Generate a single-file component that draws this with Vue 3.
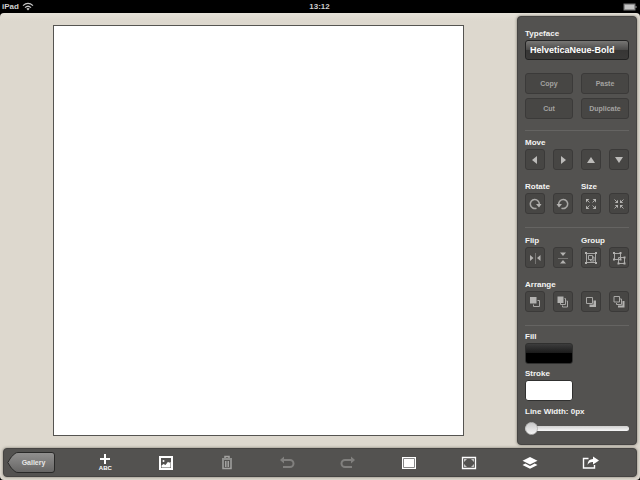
<script setup>
import { ref } from 'vue'

const typeface = ref('HelveticaNeue-Bold')
const lineWidth = ref(0)
const edits = ['Copy', 'Paste', 'Cut', 'Duplicate']
const moves = [
  { name: 'Move left', points: '7,10 12,6 12,14' },
  { name: 'Move right', points: '13,10 8,6 8,14' },
  { name: 'Move up', points: '10,7 14,13 6,13' },
  { name: 'Move down', points: '10,13 6,7 14,7' },
]
</script>

<template>
  <div class="screen">
    <header class="status">
      <span class="device">iPad
        <svg width="12" height="9" viewBox="0 0 12 9" aria-hidden="true">
          <path d="M1 3.6Q6-1 11 3.6M3 5.6Q6 2.9 9 5.6" fill="none" stroke="#c8c8c8" stroke-width="1.2" />
          <path d="M4.4 6.7Q6 5.2 7.6 6.7L6 8.4Z" fill="#c8c8c8" />
        </svg>
      </span>
      <time>13:12</time>
      <svg class="battery" width="14" height="8" viewBox="0 0 14 8" aria-hidden="true">
        <rect x="1" y="1" width="11" height="6" fill="#aaa" stroke="#777" />
        <rect x="2" y="2" width="9" height="4" fill="#c4c4c4" />
        <rect x="12.5" y="3" width="1" height="2" fill="#999" />
      </svg>
    </header>

    <div class="desk">
      <main class="work">
        <section class="stage"><div class="canvas"></div></section>

        <aside class="panel">
          <section class="group">
            <label for="face">Typeface</label>
            <select id="face" v-model="typeface" class="face">
              <option>HelveticaNeue-Bold</option>
            </select>
            <div class="edits">
              <button v-for="e in edits" :key="e" class="key">{{ e }}</button>
            </div>
          </section>

          <section class="group place">
            <h2>Move</h2>
            <div class="keys">
              <button v-for="m in moves" :key="m.name" class="key" :aria-label="m.name">
                <svg viewBox="0 0 20 20"><polygon :points="m.points" fill="#bcbbb9" /></svg>
              </button>
            </div>
            <div class="heads"><h2>Rotate</h2><h2>Size</h2></div>
            <div class="keys">
              <button class="key" aria-label="Rotate clockwise">
                <svg viewBox="0 0 20 20">
                  <path d="M11.500 14.200A4.500 4.500 0 1 1 14.300 10.500" class="arc" />
                  <path d="M11 10H16.500L14 13.500Z" class="solid" />
                </svg>
              </button>
              <button class="key" aria-label="Rotate anticlockwise">
                <svg viewBox="0 0 20 20">
                  <path d="M8.500 14.200A4.500 4.500 0 1 0 5.700 10.500" class="arc" />
                  <path d="M9 10H3.500L6 13.500Z" class="solid" />
                </svg>
              </button>
              <button class="key" aria-label="Enlarge">
                <svg viewBox="0 0 20 20">
                  <path d="M5 5h3.400L5 8.400ZM15 5v3.400L11.600 5ZM5 15v-3.400L8.400 15ZM15 15h-3.400L15 11.600Z" class="solid" />
                  <path d="M6 6l2.500 2.500M14 6l-2.500 2.500M6 14l2.500-2.500M14 14l-2.500-2.500" class="line" />
                </svg>
              </button>
              <button class="key" aria-label="Shrink">
                <svg viewBox="0 0 20 20">
                  <path d="M9 9V5.800L5.800 9ZM11 9V5.800L14.200 9ZM9 11v3.200L5.800 11ZM11 11v3.200L14.200 11Z" class="solid" />
                  <path d="M5.500 5.500l2.500 2.500M14.500 5.500L12 8M5.500 14.500L8 12M14.500 14.500L12 12" class="line" />
                </svg>
              </button>
            </div>
          </section>

          <section class="group flip">
            <div class="heads"><h2>Flip</h2><h2>Group</h2></div>
            <div class="keys">
              <button class="key" aria-label="Flip horizontally">
                <svg viewBox="0 0 20 20">
                  <path d="M5 7L8.500 10L5 13ZM15.500 7L12 10L15.500 13Z" class="solid" />
                  <path d="M10.500 5v11" class="line dim" />
                </svg>
              </button>
              <button class="key" aria-label="Flip vertically">
                <svg viewBox="0 0 20 20">
                  <path d="M7 4.500h6L10 8ZM7 15.500h6L10 12Z" class="solid" />
                  <path d="M5 10.500h10" class="line dim" />
                </svg>
              </button>
              <button class="key" aria-label="Group">
                <svg viewBox="0 0 20 20">
                  <path d="M5.500 5.500h9v9h-9ZM7.500 7.500h4v4h-4ZM9.500 12v1h3.500v-4h-1" class="line" />
                  <path d="M4 4h2v2H4ZM14 4H16v2h-2ZM4 14h2V16H4ZM14 14H16V16h-2Z" class="solid" />
                </svg>
              </button>
              <button class="key" aria-label="Ungroup">
                <svg viewBox="0 0 20 20">
                  <path d="M5.500 5.500h6v6h-6ZM9.500 9.500h6v6h-6Z" class="line" />
                  <path d="M4 4h2v2h-2ZM10.500 4h2v2h-2ZM4 10.500h2v2h-2ZM10.500 10.500h2v2h-2ZM14.500 8.500h2v2h-2ZM8.500 14.500h2v2h-2ZM14.500 14.500h2v2h-2Z" class="solid" />
                </svg>
              </button>
            </div>
            <h2 class="spaced">Arrange</h2>
            <div class="keys">
              <button class="key" aria-label="Bring to front">
                <svg viewBox="0 0 20 20">
                  <path d="M5 5h6.500v6.500H5Z" class="solid" />
                  <path d="M12.500 8.500h2v6h-6v-2" class="line" />
                </svg>
              </button>
              <button class="key" aria-label="Bring forward">
                <svg viewBox="0 0 20 20">
                  <path d="M4.500 4.500h6V11h-6Z" class="solid" />
                  <path d="M11.500 6.500h1v6h-5v-1.500M13.500 9h1v6h-5v-1.500" class="line" />
                </svg>
              </button>
              <button class="key" aria-label="Send to back">
                <svg viewBox="0 0 20 20">
                  <path d="M5.500 5.500h6v6h-6Z" class="line" />
                  <path d="M12.500 8.500h2.500V15H8.500v-2.500H12.500Z" class="solid" />
                </svg>
              </button>
              <button class="key" aria-label="Send backward">
                <svg viewBox="0 0 20 20">
                  <path d="M5 4.500h5.500v5.500H5ZM11 7h1.500v5.500h-5v-1.500" class="line" />
                  <path d="M13.500 9H15.500V15.500H9v-2h4.500Z" class="solid" />
                </svg>
              </button>
            </div>
          </section>

          <section class="group paint">
            <h2>Fill</h2>
            <button class="swatch black" aria-label="Fill colour"></button>
            <h2>Stroke</h2>
            <button class="swatch white" aria-label="Stroke colour"></button>
            <label for="width">Line Width: {{ lineWidth }}px</label>
            <input id="width" v-model="lineWidth" type="range" min="0" max="50">
          </section>
        </aside>
      </main>

      <nav class="toolbar">
        <button class="gallery">
          <svg viewBox="0 0 48 21" preserveAspectRatio="none" aria-hidden="true">
            <defs>
              <linearGradient id="steel" x2="0" y2="1">
                <stop offset="0" stop-color="#929190" />
                <stop offset="1" stop-color="#666564" />
              </linearGradient>
            </defs>
            <path d="M.8 10.500Q4 4 8 1.500Q9 .500 11 .500H45Q47.500 .500 47.500 3V18Q47.500 20.500 45 20.500H11Q9 20.500 8 19.500Q4 17 .8 10.500Z" fill="url(#steel)" stroke="#292928" />
          </svg>
          <span>Gallery</span>
        </button>
        <div class="tools">
          <button class="tool text" aria-label="Add text">
            <svg width="10" height="10" viewBox="0 0 10 10"><path d="M5 0v10M0 5h10" stroke="#fff" stroke-width="2" /></svg>
            <span>ABC</span>
          </button>
          <button class="tool" aria-label="Add picture">
            <svg viewBox="0 0 24 24">
              <rect x="6" y="6" width="12" height="12" fill="none" stroke="#fff" stroke-width="2" />
              <path d="M7.500 16.500V14.500l2-1.500 2 1 2.500-3.200 1.200 1 1.300-.8v5.500Z" fill="#fff" />
              <circle cx="9.500" cy="10" r="1" fill="#fff" />
            </svg>
          </button>
          <button class="tool" aria-label="Delete">
            <svg viewBox="0 0 24 24" fill="none" stroke="#a3a2a0">
              <path d="M10 7V5.500h4V7M7 8h10" stroke-width="1.500" />
              <path d="M8 9v8.500h8V9" stroke-width="1.500" />
              <path d="M10.500 10v6M12 10v6M13.500 10v6" />
            </svg>
          </button>
          <button class="tool" aria-label="Undo">
            <svg viewBox="0 0 24 24">
              <path d="M8 9h7a3.300 3.300 0 0 1 0 7H8" fill="none" stroke="#81807e" stroke-width="2" />
              <path d="M5 9l4-3.500v7Z" fill="#81807e" />
            </svg>
          </button>
          <button class="tool" aria-label="Redo">
            <svg viewBox="0 0 24 24">
              <path d="M16 9H9a3.300 3.300 0 0 0 0 7H16" fill="none" stroke="#81807e" stroke-width="2" />
              <path d="M19 9l-4-3.500v7Z" fill="#81807e" />
            </svg>
          </button>
          <button class="tool" aria-label="Artboard">
            <svg viewBox="0 0 24 24">
              <path d="M5 6h14v12H5Z" fill="#fff" />
              <path d="M6.500 7.500h11v9h-11Z" fill="#fff" stroke="#888" />
            </svg>
          </button>
          <button class="tool" aria-label="Full screen">
            <svg viewBox="0 0 24 24">
              <path d="M5.500 6.500h13v11h-13Z" fill="none" stroke="#fff" stroke-width="1.300" />
              <path d="M7 8h3L7 11ZM17 8v3l-3-3ZM7 16v-3l3 3ZM17 16h-3l3-3Z" fill="#c4c4c3" />
            </svg>
          </button>
          <button class="tool" aria-label="Layers">
            <svg viewBox="0 0 24 24" fill="#fff">
              <path d="M12 6l7.500 3.800L12 13.500 4.500 9.800Z" />
              <path d="M4.500 14l2.800-1.400L12 15l4.700-2.400 2.800 1.400L12 17.800Z" />
            </svg>
          </button>
          <button class="tool" aria-label="Share">
            <svg viewBox="0 0 24 24">
              <path d="M9.500 7.500h-5v9.500h11v-3" fill="none" stroke="#fff" stroke-width="1.400" />
              <path d="M14 5.500l6 4-6 4v-2.500q-4-.2-5.500 3 .2-6 5.500-6Z" fill="#fff" />
            </svg>
          </button>
        </div>
      </nav>
    </div>
  </div>
</template>

<style>
body { margin: 0; background: #000; }
</style>

<style scoped>
* { box-sizing: border-box; }
.screen {
  min-height: 100vh;
  display: flex;
  flex-direction: column;
  font-family: "Liberation Sans", Arial, sans-serif;
  background: #000;
}
button, select { font-family: inherit; padding: 0; margin: 0; }
.status {
  height: 13px;
  display: grid;
  grid-template-columns: 1fr auto 1fr;
  align-items: center;
  padding: 0 3px 0 2px;
  color: #cfcfcf;
  font-size: 8px;
  font-weight: bold;
  line-height: 12px;
}
.device { display: flex; align-items: center; gap: 3px; }
.battery { justify-self: end; }
.desk {
  flex: 1;
  display: flex;
  flex-direction: column;
  gap: 3px;
  padding: 3px;
  border-radius: 4px;
  background: linear-gradient(#e6e2d9, #ddd8ce 8px, #ddd8ce);
}
.work { flex: 1; display: flex; }
.stage { flex: 1; display: flex; justify-content: center; padding: 9px 4px 9px 0; }
.canvas { aspect-ratio: 1; background: #fff; border: 1px solid #555451; }
.panel {
  width: 120px;
  padding: 11px 7px 8px;
  border: 1px solid #454442;
  border-radius: 4px;
  background: #535250;
  box-shadow: 0 0 3px #77736a;
}
.group { padding-bottom: 12px; }
.group + .group { border-top: 1px solid #656462; padding-top: 7px; }
.group:first-child { padding-bottom: 11px; }
.group.place { padding-top: 6px; padding-bottom: 13px; }
.group.flip { padding-bottom: 13px; }
.group.paint { padding: 5px 0 0; }
h2, label {
  display: block;
  margin: 0;
  height: 12px;
  color: #f4f4f3;
  font-size: 8px;
  line-height: 12px;
  font-weight: bold;
  white-space: nowrap;
}
.face {
  appearance: none;
  display: block;
  width: 100%;
  height: 20px;
  padding: 0 4px;
  border: 1px solid #222;
  border-radius: 3px;
  color: #fff;
  font-size: 9px;
  font-weight: bold;
  background: linear-gradient(#777674, #4b4a49 50%, #373635 52%, #3b3a39);
}
.edits { display: grid; grid-template-columns: 1fr 1fr; gap: 4px 8px; margin-top: 13px; }
.keys { display: grid; grid-template-columns: repeat(4, 20px); justify-content: space-between; }
.heads { display: grid; grid-template-columns: 1fr 1fr; column-gap: 8px; }
.keys + .heads, .spaced { margin-top: 11px; }
.key {
  height: 21px;
  display: flex;
  align-items: center;
  justify-content: center;
  border: 1px solid #3b3a39;
  border-radius: 3px;
  background: #474644;
  color: #a3a2a0;
  font-size: 7px;
  font-weight: bold;
}
.key svg { width: 20px; height: 20px; flex: none; }
.arc { fill: none; stroke: #a9a8a6; stroke-width: 1.5; }
.line { fill: none; stroke: #a9a8a6; stroke-width: 1; }
.dim { stroke: #777674; }
.solid { fill: #b3b2b0; }
.swatch {
  display: block;
  width: 48px;
  height: 21px;
  border: 1px solid #30302f;
  border-radius: 3px;
  margin-bottom: 4px;
}
.black { background: linear-gradient(#3c3c3c, #1c1c1c 45%, #000 50%); }
.white { background: #fff; margin-bottom: 5px; }
input[type="range"] {
  appearance: none;
  display: block;
  width: 100%;
  height: 13px;
  margin: 4px 0 0;
  background: transparent;
}
input[type="range"]::-webkit-slider-runnable-track {
  height: 5px;
  border-radius: 3px;
  background: linear-gradient(#cfcfce, #f8f8f8);
}
input[type="range"]::-webkit-slider-thumb {
  appearance: none;
  width: 13px;
  height: 13px;
  margin-top: -4px;
  border-radius: 50%;
  background: linear-gradient(#c9c9c9, #f4f4f4);
  border: 1px solid #b5b5b4;
}
.toolbar {
  display: flex;
  align-items: center;
  height: 29px;
  padding: 0 15px 0 3px;
  border: 1px solid #454442;
  border-radius: 4px;
  background: #535250;
  box-shadow: 0 0 3px #77736a;
}
.gallery {
  position: relative;
  width: 48px;
  height: 21px;
  border: 0;
  background: none;
  color: #e6e6e5;
  font-size: 7px;
  font-weight: bold;
  padding-left: 5px;
}
.gallery svg { position: absolute; inset: 0; width: 100%; height: 100%; }
.gallery span { position: relative; }
.tools { flex: 1; display: grid; grid-template-columns: repeat(9, 1fr); margin-left: 20px; }
.tool {
  height: 24px;
  display: flex;
  flex-direction: column;
  align-items: center;
  justify-content: center;
  border: 0;
  background: none;
  color: #fff;
  font-size: 6px;
  font-weight: bold;
  line-height: 6px;
}
.tool svg { flex: none; width: 24px; height: 24px; }
.text svg { width: 10px; height: 10px; }
.text span { margin-top: 1px; }
</style>
